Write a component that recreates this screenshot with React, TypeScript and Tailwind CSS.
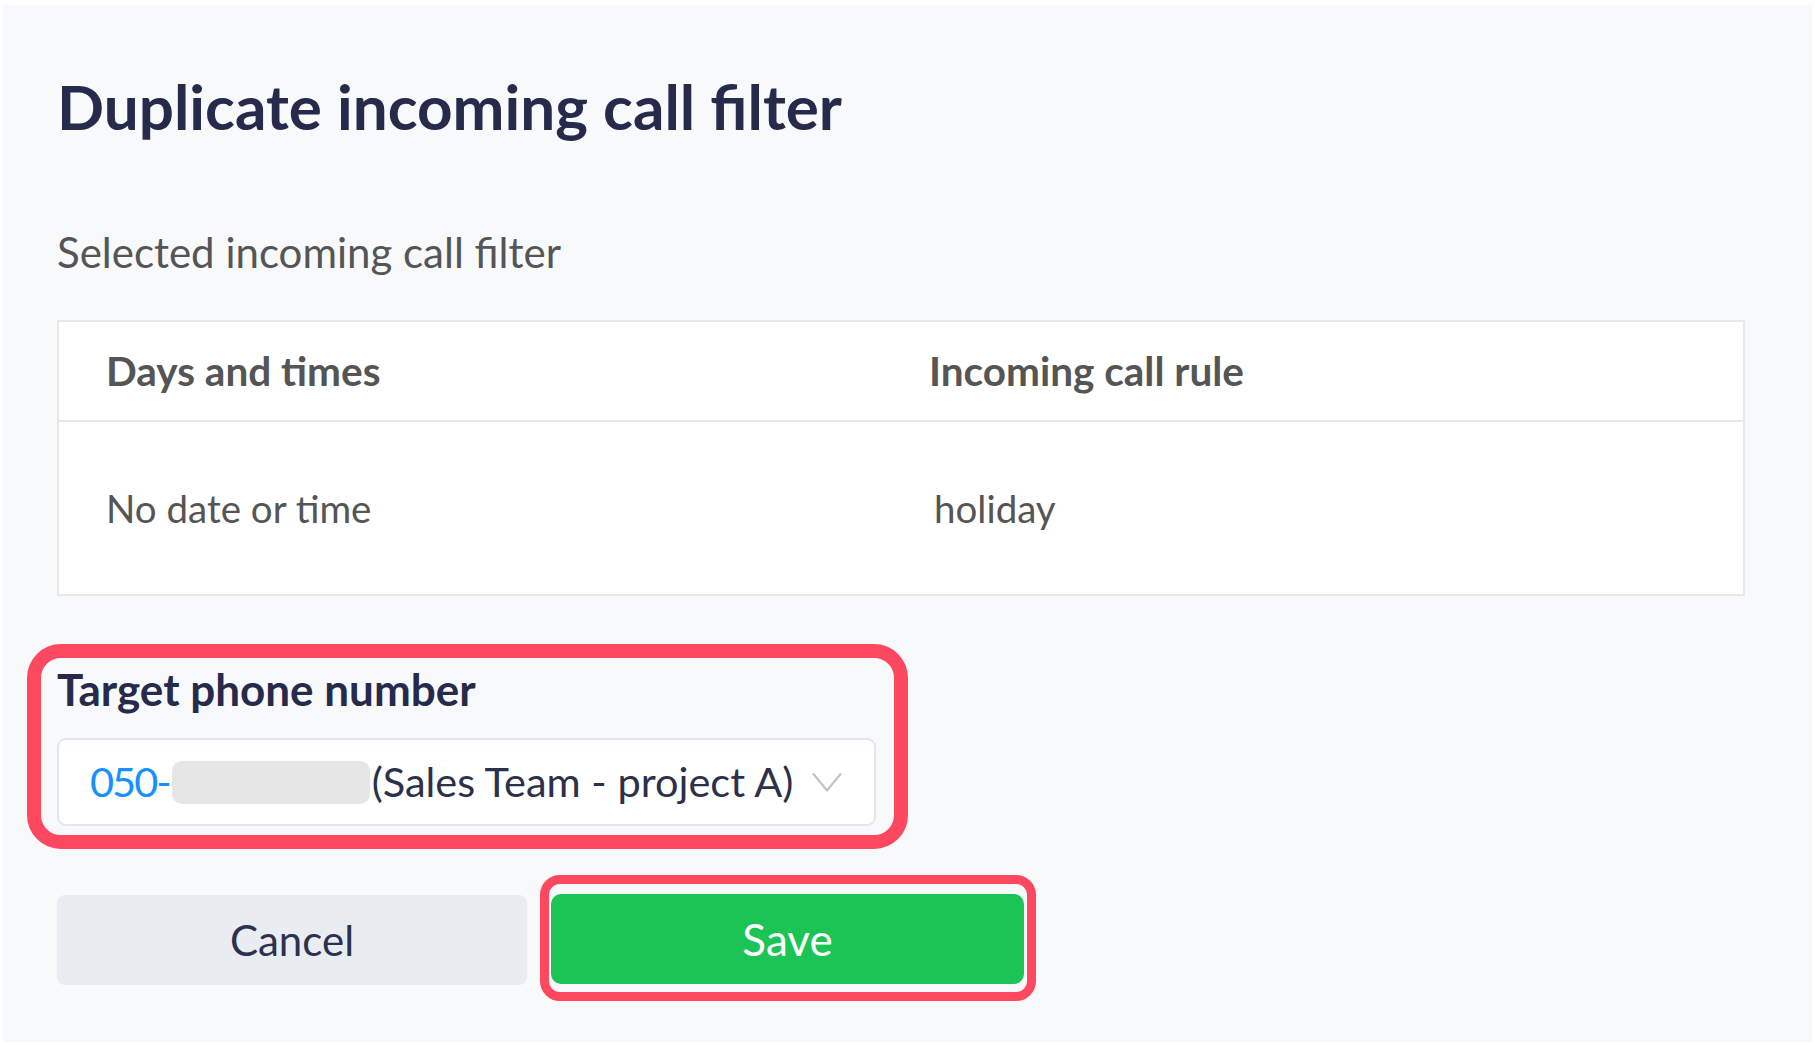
import React from "react";

function Chevron() {
  return (
    <svg width="30" height="20" viewBox="0 0 30 20" fill="none" className="shrink-0">
      <polyline points="1,1.5 15,18.5 29,1.5" stroke="#c3c3c3" strokeWidth="2.2" strokeLinejoin="round" />
    </svg>
  );
}

export default function App() {
  return (
    <div className="w-full h-[1045px] bg-white pt-[5px] px-[3px] pb-[3px] font-['Lato',sans-serif]">
      <div className="h-full bg-[#f8f9fb] pl-[54px] pr-[67px] pt-[70px]">
        <h1 className="text-[62px] leading-none font-bold text-[#262a4b]">
          Duplicate incoming call filter
        </h1>

        <p className="mt-[94px] text-[42px] leading-none text-[#555]">Selected incoming call filter</p>

        {/* selected filter table */}
        <div className="mt-[47px] border-2 border-[#e8e8e8] bg-white text-[#555]">
          <div className="flex h-[100px] items-center border-b-2 border-[#e8e8e8] text-[40.5px] leading-none font-bold">
            <div className="w-[824px] pl-[47px]">Days and times</div>
            <div className="pl-[46px]">Incoming call rule</div>
          </div>
          <div className="flex h-[172px] items-center text-[38.5px] leading-none">
            <div className="w-[824px] pl-[47px]">No date or time</div>
            <div className="pl-[51px]">holiday</div>
          </div>
        </div>

        {/* target phone number (highlighted) */}
        <div className="mt-[48px] -ml-[30px] w-[881px] rounded-[34px] border-[14px] border-[#fd4860] pl-[16px] pr-[18px] pt-[9px] pb-[9px]">
          <div className="text-[44px] leading-none font-bold text-[#262a4b]">Target phone number</div>
          <div className="mt-[27px] flex h-[88px] items-center rounded-[9px] border-2 border-[#e3e6eb] bg-white pl-[31px] pr-[32px] text-[41.5px] leading-none">
            <span className="tracking-[-2px] text-[#1890ff]">050-</span>
            <span className="ml-[2px] inline-block h-[43px] w-[198px] rounded-[10px] bg-[#e6e6e6]" />
            <span className="ml-[2px] text-[#2c3049]">(Sales Team - project A)</span>
            <div className="flex-1" />
            <Chevron />
          </div>
        </div>

        {/* actions */}
        <div className="mt-[46px] flex items-start">
          <button className="flex h-[90px] w-[470px] items-center justify-center rounded-[8px] bg-[#e9edf2] text-[42px] leading-none text-[#2c3150]">
            Cancel
          </button>
          <div className="-mt-[20px] ml-[13px] rounded-[20px] border-[9px] border-[#fd4860] pl-[2px] pr-[3px] pt-[10px] pb-[8px]">
            <button className="flex h-[90px] w-[473px] items-center justify-center rounded-[10px] bg-[#1cc355] text-[44px] leading-none text-white">
              Save
            </button>
          </div>
        </div>
      </div>
    </div>
  );
}
